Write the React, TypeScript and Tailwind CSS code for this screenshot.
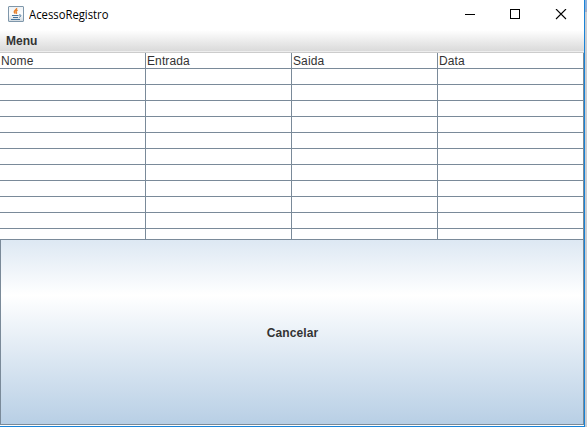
const headers = ["Nome", "Entrada", "Saida", "Data"];
const emptyRows = Array.from({ length: 11 }, (_, i) => i);

function JavaIcon() {
  return (
    <svg width="16" height="16" viewBox="0 0 16 16" fill="none">
      <defs>
        <linearGradient id="tile" x1="0" y1="0" x2="0" y2="1">
          <stop offset="0" stopColor="#eef2f5" />
          <stop offset="0.5" stopColor="#fdfdfd" />
          <stop offset="1" stopColor="#d0d9e0" />
        </linearGradient>
      </defs>
      <rect x="0.5" y="0.5" width="15" height="15" rx="0.5" fill="url(#tile)" stroke="#7f97ab" />
      <path d="M8.6 2c.6 1.8-3 2.4-2.3 4.2.2.6.8 1 .9 1.4M9.6 4.2c-2 .9-1.8 1.7-1.1 2.5.3.4 0 .7-.4 1" stroke="#e8822e" strokeWidth="1.4" />
      <path d="M4 9.5h6.5M5 11.5h5M3 13.5h9" stroke="#49749c" />
      <path d="M11 9c2.5-.6 2.6 1.4.2 2.3" stroke="#49749c" />
    </svg>
  );
}

function TitleBar() {
  return (
    <header className="flex h-[30px] shrink-0 items-center bg-white pl-2">
      <div className="-mt-0.5 flex items-center">
        <JavaIcon />
        <svg className="ml-[5px]" width="90" height="16" aria-label="AcessoRegistro">
          <text x="0" y="13" textLength="79.5" lengthAdjust="spacingAndGlyphs" fill="#000" className="font-['Open_Sans',sans-serif] text-[12px]">
            AcessoRegistro
          </text>
        </svg>
      </div>
      <svg className="mr-[17px] ml-auto -mt-0.5" width="102" height="11" fill="none" stroke="#000" shapeRendering="crispEdges">
        <path d="M0 5.5h10" />
        <rect x="45.5" y="0.5" width="9" height="9" />
        <path d="M91 0l10 10M101 0l-10 10" shapeRendering="auto" strokeWidth="1.1" />
      </svg>
    </header>
  );
}

export default function App() {
  return (
    <div className="flex h-[427px] w-[587px] overflow-hidden bg-white font-['Liberation_Sans',Arial,sans-serif] text-[12px] text-[#333]">
      <main className="flex w-[584px] flex-col">
        <TitleBar />
        <nav className="h-[21px] shrink-0 bg-linear-to-b from-white to-[#dadada] px-1.5 leading-[22px] font-bold">
          Menu
        </nav>
        <div className="h-0.5 shrink-0 border-b border-[#ccc] bg-[#eee]" />
        <section className="h-[186px] shrink-0 overflow-hidden bg-white">
          <div className="grid grid-cols-4">
            {headers.map((h) => (
              <div key={h} className="h-4 border-r border-b border-[#7a8a99] pl-px leading-[16px] tracking-[0.1px]">
                {h}
              </div>
            ))}
          </div>
          {emptyRows.map((r) => (
            <div key={r} className="grid grid-cols-4">
              {headers.map((h) => (
                <div key={h} className="h-4 border-r border-b border-[#7a8a99]" />
              ))}
            </div>
          ))}
        </section>
        <button className="flex h-[186px] shrink-0 items-center justify-center border border-[#7a8a99] bg-linear-to-b from-[#dde8f3] via-white via-30% to-[#b8cfe5] pt-0.5 pr-0 pl-px font-bold tracking-[0.1px]">
          Cancelar
        </button>
        <div className="mt-px h-px bg-[#1883d7]" />
      </main>
      <div className="w-px bg-[#1883d7]" />
      <aside className="flex w-[2px] flex-col bg-[#ccced2]">
        <div className="h-[9px] bg-[#8fb2dc]" />
        <div className="h-[3px] bg-[#a4adc5]" />
      </aside>
    </div>
  );
}
